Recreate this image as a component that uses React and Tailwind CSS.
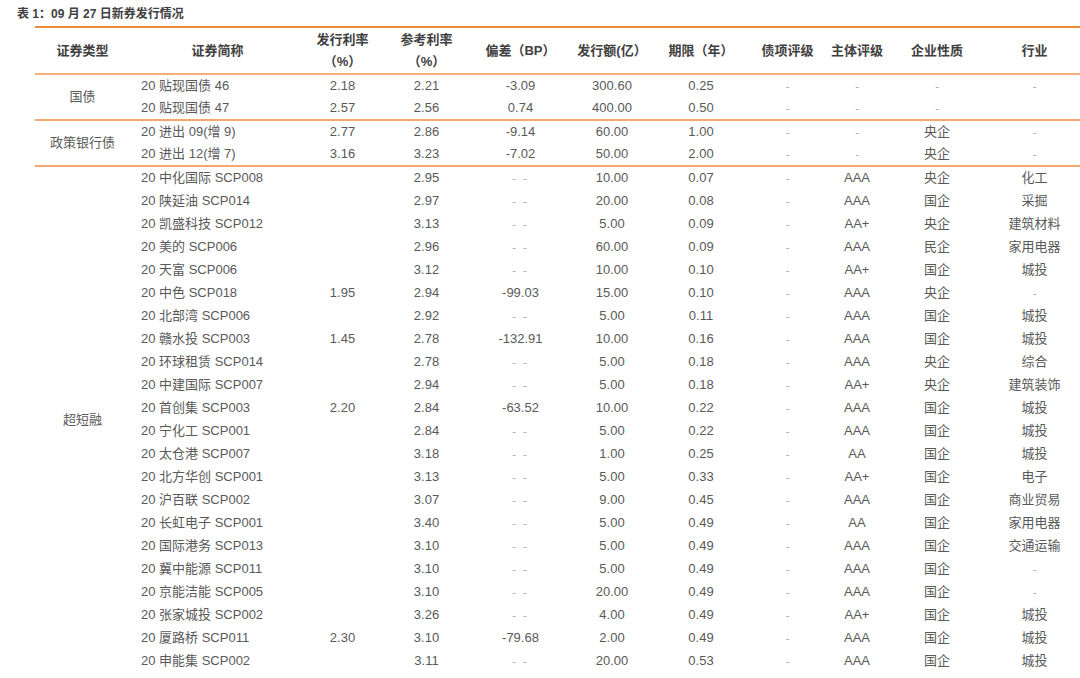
const cols = [95, 175, 75, 93, 95, 88, 90, 83, 56, 104, 91];

const headers = [
	["证券类型"],
	["证券简称"],
	["发行利率", "（%）"],
	["参考利率", "（%）"],
	["偏差（BP）"],
	["发行额(亿）"],
	["期限（年）"],
	["债项评级"],
	["主体评级"],
	["企业性质"],
	["行业"],
];

const groups = [
	{
		name: "国债",
		rows: [
			["20 贴现国债 46", "2.18", "2.21", "-3.09", "300.60", "0.25", "-", "-", "-", "-"],
			["20 贴现国债 47", "2.57", "2.56", "0.74", "400.00", "0.50", "-", "-", "-", ""],
		],
	},
	{
		name: "政策银行债",
		rows: [
			["20 进出 09(增 9)", "2.77", "2.86", "-9.14", "60.00", "1.00", "-", "-", "央企", "-"],
			["20 进出 12(增 7)", "3.16", "3.23", "-7.02", "50.00", "2.00", "-", "-", "央企", "-"],
		],
	},
	{
		name: "超短融",
		rows: [
			["20 中化国际 SCP008", "", "2.95", "--", "10.00", "0.07", "-", "AAA", "央企", "化工"],
			["20 陕延油 SCP014", "", "2.97", "--", "20.00", "0.08", "-", "AAA", "国企", "采掘"],
			["20 凯盛科技 SCP012", "", "3.13", "--", "5.00", "0.09", "-", "AA+", "央企", "建筑材料"],
			["20 美的 SCP006", "", "2.96", "--", "60.00", "0.09", "-", "AAA", "民企", "家用电器"],
			["20 天富 SCP006", "", "3.12", "--", "10.00", "0.10", "-", "AA+", "国企", "城投"],
			["20 中色 SCP018", "1.95", "2.94", "-99.03", "15.00", "0.10", "-", "AAA", "央企", "-"],
			["20 北部湾 SCP006", "", "2.92", "--", "5.00", "0.11", "-", "AAA", "国企", "城投"],
			["20 赣水投 SCP003", "1.45", "2.78", "-132.91", "10.00", "0.16", "-", "AAA", "国企", "城投"],
			["20 环球租赁 SCP014", "", "2.78", "--", "5.00", "0.18", "-", "AAA", "央企", "综合"],
			["20 中建国际 SCP007", "", "2.94", "--", "5.00", "0.18", "-", "AA+", "央企", "建筑装饰"],
			["20 首创集 SCP003", "2.20", "2.84", "-63.52", "10.00", "0.22", "-", "AAA", "国企", "城投"],
			["20 宁化工 SCP001", "", "2.84", "--", "5.00", "0.22", "-", "AAA", "国企", "城投"],
			["20 太仓港 SCP007", "", "3.18", "--", "1.00", "0.25", "-", "AA", "国企", "城投"],
			["20 北方华创 SCP001", "", "3.13", "--", "5.00", "0.33", "-", "AA+", "国企", "电子"],
			["20 沪百联 SCP002", "", "3.07", "--", "9.00", "0.45", "-", "AAA", "国企", "商业贸易"],
			["20 长虹电子 SCP001", "", "3.40", "--", "5.00", "0.49", "-", "AA", "国企", "家用电器"],
			["20 国际港务 SCP013", "", "3.10", "--", "5.00", "0.49", "-", "AAA", "国企", "交通运输"],
			["20 冀中能源 SCP011", "", "3.10", "--", "5.00", "0.49", "-", "AAA", "国企", "-"],
			["20 京能洁能 SCP005", "", "3.10", "--", "20.00", "0.49", "-", "AAA", "国企", "-"],
			["20 张家城投 SCP002", "", "3.26", "--", "4.00", "0.49", "-", "AA+", "国企", "城投"],
			["20 厦路桥 SCP011", "2.30", "3.10", "-79.68", "2.00", "0.49", "-", "AAA", "国企", "城投"],
			["20 申能集 SCP002", "", "3.11", "--", "20.00", "0.53", "-", "AAA", "国企", "城投"],
		],
	},
];

function Cell({ value, idx }) {
	if (idx === 0) {
		return <td className="pl-[11px] text-left whitespace-nowrap">{value}</td>;
	}
	if (value === "-") {
		return <td className="text-center text-[#a6a6a6] text-[11px]">-</td>;
	}
	if (value === "--") {
		return <td className="text-center text-[#a6a6a6] text-[11px] tracking-[2px]">- -</td>;
	}
	return <td className="text-center whitespace-nowrap">{value}</td>;
}

export default function App() {
	return (
		<div className="w-[1080px] h-[678px] bg-white overflow-hidden font-['Liberation_Sans','Noto_Sans_CJK_SC',sans-serif] text-[13px] text-[#595959]">
			<div className="pl-[17px] pt-[6px] h-[26px] text-[12px] font-bold text-[#404040] leading-[16px]">
				表 1：09 月 27 日新券发行情况
			</div>
			<table className="ml-[35px] w-[1045px] table-fixed border-collapse">
				<colgroup>
					{cols.map((w, i) => (
						<col key={i} style={{ width: w }} />
					))}
				</colgroup>
				<thead>
					<tr className="h-[47px] border-t-2 border-b-2 border-t-[#f08a30] border-b-[#f7ae7a]">
						{headers.map((h, i) => (
							<th key={i} className="font-bold text-[#404040] text-center leading-[22px] whitespace-nowrap">
								{h.map((line, j) => (
									<div key={j}>{line}</div>
								))}
							</th>
						))}
					</tr>
				</thead>
				{groups.map((g, gi) => (
					<tbody key={gi} className={gi < groups.length - 1 ? "border-b-2 border-[#f4a870]" : ""}>
						{g.rows.map((r, ri) => (
							<tr
								key={ri}
								className={
									gi < 2 && ri === g.rows.length - 1
										? "h-[22px] leading-[22px]"
										: "h-[23px] leading-[22px]"
								}
							>
								{ri === 0 && (
									<td rowSpan={g.rows.length} className="text-center align-middle text-[#595959]">
										{g.name}
									</td>
								)}
								{r.map((v, ci) => (
									<Cell key={ci} value={v} idx={ci} />
								))}
							</tr>
						))}
					</tbody>
				))}
			</table>
		</div>
	);
}
